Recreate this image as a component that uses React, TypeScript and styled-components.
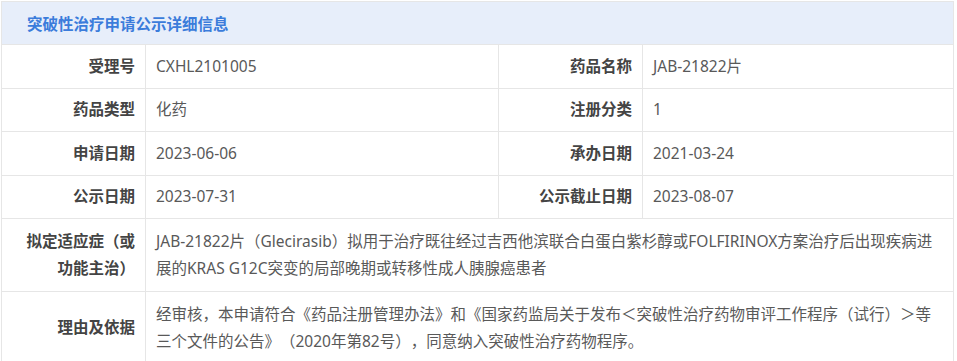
import React from "react";
import styled, { createGlobalStyle } from "styled-components";

const Global = createGlobalStyle`
  html, body { margin: 0; padding: 0; background: #ffffff; }
  body { font-family: "Noto Sans", "Noto Sans CJK SC", sans-serif; }
`;

const Page = styled.div`
  padding: 1px 0 0 1px;
`;

const Table = styled.div`
  width: 953px;
  box-sizing: border-box;
  border: 1px solid #e6e6e6;
  display: grid;
  grid-template-columns: 143px 352px 143px 1fr;
  gap: 1px;
  background: #e6e6e6;
  font-size: 15.5px;
  text-spacing-trim: space-all;
`;

const Header = styled.div`
  grid-column: 1 / -1;
  height: 42px;
  display: flex;
  align-items: center;
  padding-left: 25px;
  background: #e7eefa;
  color: #3b7cdb;
  font-weight: 700;
  font-family: "Noto Sans CJK SC", "Noto Sans", sans-serif;
`;

const Cell = styled.div<{ $label?: boolean; $tall?: boolean; $span?: number }>`
  background: #ffffff;
  box-sizing: border-box;
  min-height: 42px;
  display: flex;
  align-items: center;
  justify-content: ${(p) => (p.$label ? "flex-end" : "flex-start")};
  text-align: ${(p) => (p.$label ? "right" : "left")};
  padding: ${(p) => (p.$tall ? "8.5px" : "7.5px")} 10px
    ${(p) => (p.$tall ? "8.5px" : "7.5px")} ${(p) => (p.$label ? "20px" : "10px")};
  line-height: 27.5px;
  color: ${(p) => (p.$label ? "#444444" : "#595959")};
  font-weight: ${(p) => (p.$label ? 700 : 400)};
  ${(p) => (p.$span ? `grid-column: span ${p.$span};` : "")}
`;

const rows: [string, string, string, string][] = [
  ["受理号", "CXHL2101005", "药品名称", "JAB-21822片"],
  ["药品类型", "化药", "注册分类", "1"],
  ["申请日期", "2023-06-06", "承办日期", "2021-03-24"],
  ["公示日期", "2023-07-31", "公示截止日期", "2023-08-07"],
];

const wide: [string, string][] = [
  [
    "拟定适应症（或功能主治）",
    "JAB-21822片（Glecirasib）拟用于治疗既往经过吉西他滨联合白蛋白紫杉醇或FOLFIRINOX方案治疗后出现疾病进展的KRAS G12C突变的局部晚期或转移性成人胰腺癌患者",
  ],
  [
    "理由及依据",
    "经审核，本申请符合《药品注册管理办法》和《国家药监局关于发布＜突破性治疗药物审评工作程序（试行）＞等三个文件的公告》（2020年第82号），同意纳入突破性治疗药物程序。",
  ],
];

export default function App() {
  return (
    <>
      <Global />
      <Page>
        <Table>
          <Header>突破性治疗申请公示详细信息</Header>
          {rows.map((r) => (
            <React.Fragment key={r[0]}>
              <Cell $label>{r[0]}</Cell>
              <Cell>{r[1]}</Cell>
              <Cell $label>{r[2]}</Cell>
              <Cell>{r[3]}</Cell>
            </React.Fragment>
          ))}
          {wide.map((w) => (
            <React.Fragment key={w[0]}>
              <Cell $label $tall>
                {w[0]}
              </Cell>
              <Cell $tall $span={3}>
                {w[1]}
              </Cell>
            </React.Fragment>
          ))}
        </Table>
      </Page>
    </>
  );
}
